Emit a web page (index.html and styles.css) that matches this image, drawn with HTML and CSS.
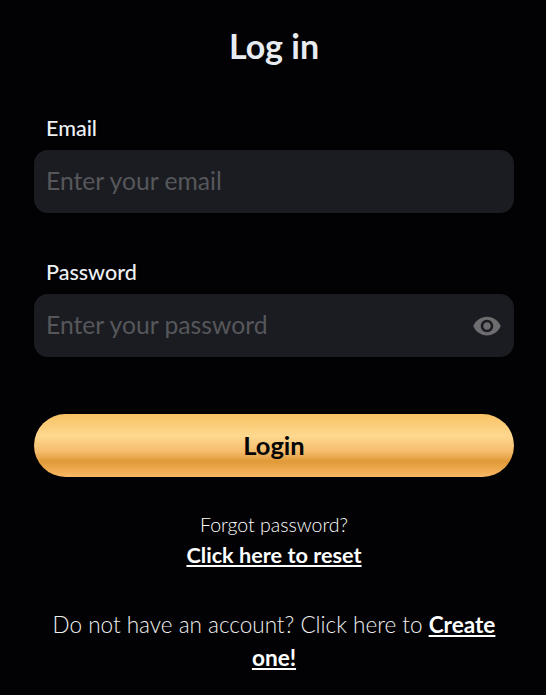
FILE: index.html
```html
<!DOCTYPE html>
<html lang="en">
<head>
<meta charset="utf-8">
<title>Log in</title>
<link rel="stylesheet" href="styles.css">
</head>
<body>
<main class="page">
  <h1 class="title">Log in</h1>
  <form class="form">
    <div class="field">
      <label class="label" for="email">Email</label>
      <div class="control">
        <input class="input" id="email" type="email" placeholder="Enter your email">
      </div>
    </div>
    <div class="field">
      <label class="label" for="password">Password</label>
      <div class="control">
        <input class="input" id="password" type="password" placeholder="Enter your password">
        <svg class="eye" viewBox="0 0 24 24" aria-hidden="true"><path d="M12 4.5C7 4.5 2.73 7.61 1 12c1.73 4.39 6 7.5 11 7.5s9.27-3.11 11-7.5c-1.73-4.39-6-7.5-11-7.5zM12 17c-2.76 0-5-2.24-5-5s2.24-5 5-5 5 2.24 5 5-2.24 5-5 5zm0-8c-1.66 0-3 1.34-3 3s1.34 3 3 3 3-1.34 3-3-1.34-3-3-3z"/></svg>
      </div>
    </div>
    <button class="submit" type="button">Login</button>
  </form>
  <p class="forgot">Forgot password?</p>
  <a class="reset" href="#">Click here to reset</a>
  <p class="signup">Do not have an account? Click here to <a class="create" href="#">Create one!</a></p>
</main>
</body>
</html>
```
FILE: styles.css
```css
* { box-sizing: border-box; }
html, body { margin: 0; height: 100%; }
body {
  background: #020204;
  color: #e8ebf0;
  font-family: "Lato", "Liberation Sans", sans-serif;
  overflow: hidden;
}
.page {
  display: flex;
  flex-direction: column;
  align-items: center;
  padding: 26px 32px 0 34px;
}
.title {
  margin: 0;
  font-size: 34px;
  line-height: 40px;
  font-weight: 700;
  color: #e8ecf2;
}
.form {
  align-self: stretch;
  display: flex;
  flex-direction: column;
  margin-top: 50px;
}
.field { display: flex; flex-direction: column; margin-bottom: 47px; }
.field + .field { margin-bottom: 57px; }
.label {
  padding-left: 12px;
  font-size: 21.5px;
  line-height: 24px;
  margin-bottom: 10px;
  font-weight: 500;
  color: #eef0f4;
}
.control {
  display: flex;
  align-items: center;
  height: 63px;
  padding: 0 12px;
  border-radius: 14px;
  background: #1b1c21;
}
.input {
  flex: 1;
  min-width: 0;
  border: 0;
  outline: 0;
  padding: 0 0 2px;
  background: transparent;
  font: 400 24.7px "Lato", "Liberation Sans", sans-serif;
  color: #e8ebf0;
}
.input::placeholder { color: #56575b; opacity: 1; }
.eye { width: 30px; height: 30px; fill: #6d6d6f; flex: none; }
.submit {
  height: 63px;
  border: 0;
  border-radius: 32px;
  padding: 0 0 2px;
  font: 700 25.5px "Lato", "Liberation Sans", sans-serif;
  color: #050505;
  background: linear-gradient(180deg, #f8c264 0%, #fed88f 35%, #f4bb6a 60%, #e09a38 75%, #fbb866 100%);
}
.forgot {
  margin: 36px 0 0;
  font-size: 19.5px;
  line-height: 24px;
  font-weight: 300;
  color: #ffffff;
}
.reset {
  margin-top: 6px;
  font-size: 21.7px;
  line-height: 24px;
  font-weight: 700;
  color: #fff;
}
.signup {
  margin: 41px 0 0;
  text-align: center;
  font-size: 22.5px;
  line-height: 33px;
  font-weight: 300;
  color: #f0f0f0;
}
.create { font-size: 22.6px; font-weight: 700; color: #fff; }
```
